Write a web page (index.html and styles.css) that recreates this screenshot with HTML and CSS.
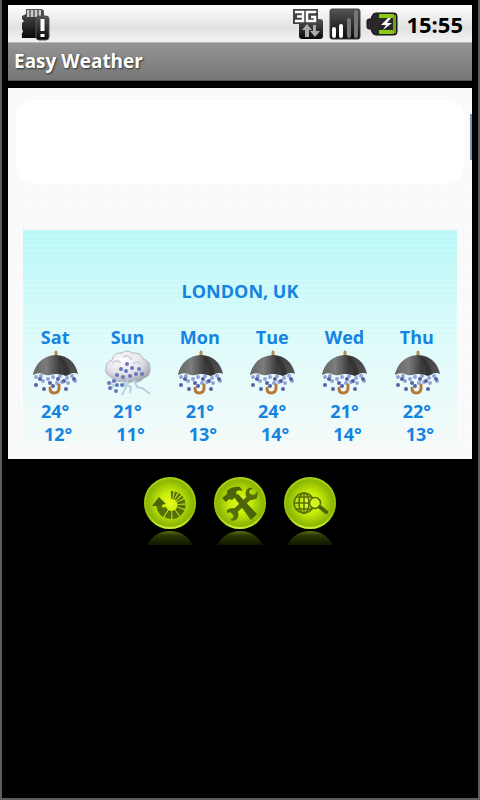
FILE: index.html
```html
<!DOCTYPE html>
<html lang="en">
<head>
    <meta charset="UTF-8">
    <meta name="viewport" content="width=device-width, initial-scale=1.0">
    <title>Easy Weather</title>
    <link rel="stylesheet" href="styles.css">
</head>
<body>
    <!-- Shared drawings -->
    <svg class="defs" width="0" height="0" aria-hidden="true">
        <defs>
            <linearGradient id="dark" x1="0" y1="0" x2="0" y2="1">
                <stop offset="0" stop-color="#555"/>
                <stop offset="1" stop-color="#080808"/>
            </linearGradient>
            <linearGradient id="canopy" x1="0" y1="0" x2="1" y2="0">
                <stop offset="0" stop-color="#666"/>
                <stop offset="0.3" stop-color="#7c7c7c"/>
                <stop offset="0.6" stop-color="#3a3a3a"/>
                <stop offset="1" stop-color="#555"/>
            </linearGradient>
            <radialGradient id="cloudfill" cx="0.4" cy="0.3" r="0.7">
                <stop offset="0" stop-color="#fff"/>
                <stop offset="0.6" stop-color="#e2e2ea"/>
                <stop offset="1" stop-color="#a3a7b1"/>
            </radialGradient>
            <radialGradient id="green" cx="0.5" cy="0.5" r="0.5">
                <stop offset="0" stop-color="#e6fc1e"/>
                <stop offset="0.45" stop-color="#c4ea0a"/>
                <stop offset="0.85" stop-color="#92bc04"/>
                <stop offset="1" stop-color="#88b400"/>
            </radialGradient>
            <linearGradient id="rim" x1="0" y1="0" x2="0" y2="1">
                <stop offset="0" stop-color="#a8d014"/>
                <stop offset="0.7" stop-color="#94c000"/>
                <stop offset="1" stop-color="#c8f030"/>
            </linearGradient>
            <linearGradient id="mirror" x1="0" y1="0" x2="0" y2="1">
                <stop offset="0" stop-color="#5c7410"/>
                <stop offset="0.3" stop-color="#2c3a06"/>
                <stop offset="1" stop-color="#101600"/>
            </linearGradient>
        </defs>
        <symbol id="drops" viewBox="0 0 48 22">
            <g fill="#98a0d8">
                <circle cx="5" cy="4" r="2"/><circle cx="10" cy="3" r="2"/><circle cx="12" cy="8" r="2"/>
                <circle cx="17" cy="6" r="2"/><circle cx="22" cy="4" r="2"/><circle cx="26" cy="10" r="2"/>
                <circle cx="29" cy="3" r="2"/><circle cx="31" cy="9" r="2"/><circle cx="36" cy="5" r="2"/>
                <circle cx="41" cy="3" r="2"/><circle cx="44" cy="8" r="2"/><circle cx="37" cy="10" r="2"/>
            </g>
            <g fill="#5762a6">
                <circle cx="5" cy="12" r="2"/><circle cx="9" cy="6" r="2"/><circle cx="13" cy="16" r="2"/>
                <circle cx="19" cy="10" r="2"/><circle cx="27" cy="6" r="2"/><circle cx="33" cy="8" r="2"/>
                <circle cx="35" cy="16" r="2"/><circle cx="43" cy="6" r="2"/><circle cx="22" cy="13" r="2"/>
            </g>
        </symbol>
        <symbol id="umbrella" viewBox="0 0 48 48">
            <path d="M25 3v5" stroke="#b58a50" stroke-width="3" stroke-linecap="round"/>
            <use href="#drops" x="0" y="24" width="48" height="22"/>
            <path d="M28 36q1 8-5 8-4 0-4-5" fill="none" stroke="#b47838" stroke-width="3" stroke-linecap="round"/>
            <path d="M2 25Q7 7 25 6q18 1 22 19-4-2-8 0-4 3-7 1-6-2-13 0-4 1-7-1-5-2-10 1z" fill="url(#canopy)"/>
            <path d="M26 7q7 7 7 19 3 2 6-1Q37 11 26 7z" fill="#2c2c2c" fill-opacity="0.6"/>
        </symbol>
        <symbol id="storm" viewBox="0 0 48 48">
            <path d="M8 28Q1 25 3 19q0-6 6-8 2-8 10-7 5-4 10 0 9-1 11 6 8 2 7 10 1 7-6 9-5 6-11 3-5 4-11 0-7 2-11-4z" fill="url(#cloudfill)" stroke="#b4b8c0"/>
            <path d="M9 14q5-4 9 0M20 8q6-3 9 3M30 15q5-4 9 0" fill="none" stroke="#d4d5dc" stroke-width="2"/>
            <path d="M15 30l-8 5 5 1-5 5M25 31l-4 6 2 1-4 8M31 31l3 7 5 1 8 6M20 34l8 4-1 6" fill="none" stroke="#b4d4e6" stroke-width="2"/>
            <g fill="#6a76ba">
                <circle cx="24" cy="15" r="2"/><circle cx="18" cy="20" r="2"/><circle cx="29" cy="19" r="2"/>
                <circle cx="36" cy="20" r="2"/><circle cx="23" cy="22" r="2"/><circle cx="14" cy="26" r="2"/>
                <circle cx="33" cy="25" r="2"/><circle cx="39" cy="25" r="2"/><circle cx="20" cy="28" r="2"/>
                <circle cx="27" cy="27" r="2"/><circle cx="11" cy="32" r="2"/><circle cx="6" cy="34" r="2"/>
                <circle cx="14" cy="36" r="2"/><circle cx="7" cy="39" r="2"/><circle cx="13" cy="42" r="2"/>
                <circle cx="19" cy="36" r="2"/>
            </g>
        </symbol>
        <symbol id="orb" viewBox="0 0 54 70">
            <circle cx="27" cy="27" r="25" fill="url(#green)" stroke="url(#rim)" stroke-width="2"/>
            <path d="M4 69Q12 55 27 55t23 14z" fill="url(#mirror)"/>
        </symbol>
    </svg>

    <div class="phone">
        <header class="status">
            <svg class="sdcard" width="30" height="34" viewBox="0 0 30 34">
                <path d="M6 2h15q3 0 3 3v26H2q-1-4 1-7l-1-2v-6l2-2-2-2V9l4-2z" fill="url(#dark)"/>
                <path d="M7 3h14v7H7z" fill="#777"/>
                <path d="M8 3v7M12 3v7M16 3v7M20 3v7" stroke="#ccc" stroke-width="2"/>
                <rect x="16" y="9" width="13" height="24" rx="3" fill="url(#dark)" stroke="#555"/>
                <path d="M22.500 12v12M22.500 27v3" stroke="#fff" stroke-width="4"/>
            </svg>
            <svg class="network" width="32" height="32" viewBox="0 0 32 32">
                <rect x="7" y="11" width="24" height="20" rx="3" fill="url(#dark)"/>
                <path d="M1 1h25v15H1z" fill="#444"/>
                <path d="M3 4h8v9H3M5 8.500h6M23 5V4h-8v9h8V9h-4" fill="none" stroke="#fff" stroke-width="2.500"/>
                <path d="M10 22l5-6 5 6h-3v7h-4v-7zM18 23h3v-6h3v6h4l-5 6z" fill="#aaa"/>
            </svg>
            <svg class="signal" width="32" height="32" viewBox="0 0 32 32">
                <rect x="1" y="1" width="30" height="30" rx="2" fill="url(#dark)" stroke="#444"/>
                <path d="M5 28V21M12 28V18" stroke="#fff" stroke-width="4" stroke-linecap="round"/>
                <path d="M20 28V12M27 28V4" stroke="#777" stroke-width="4" stroke-linecap="round"/>
            </svg>
            <svg class="battery" width="32" height="26" viewBox="0 0 32 26">
                <path d="M6 5q1-3 4-3h18q3 0 3 3v16q0 3-3 3H10q-3 0-4-3l-1-3H3q-2 0-2-2v-6q0-2 2-2h2z" fill="#282828" stroke="#111"/>
                <path d="M13 3h15v4H13zM13 19h15v4H13z" fill="#8cc814"/>
                <path d="M27 4h3v18h-3z" fill="#6fa40c"/>
                <path d="M22 7l-7 7h5l-3 5 9-7h-5l4-5z" fill="#fff"/>
            </svg>
            <span class="clock">15:55</span>
        </header>
        <h1 class="titlebar">Easy Weather</h1>

        <main>
            <section class="widget">
                <div class="banner"></div>
                <div class="forecast">
                    <h2>LONDON, UK</h2>
                    <ul class="days">
                        <li><h3>Sat</h3><svg width="48" height="48"><use href="#umbrella"/></svg><span>24°</span><span class="low">12°</span></li>
                        <li><h3>Sun</h3><svg width="48" height="48"><use href="#storm"/></svg><span>21°</span><span class="low">11°</span></li>
                        <li><h3>Mon</h3><svg width="48" height="48"><use href="#umbrella"/></svg><span>21°</span><span class="low">13°</span></li>
                        <li><h3>Tue</h3><svg width="48" height="48"><use href="#umbrella"/></svg><span>24°</span><span class="low">14°</span></li>
                        <li><h3>Wed</h3><svg width="48" height="48"><use href="#umbrella"/></svg><span>21°</span><span class="low">14°</span></li>
                        <li><h3>Thu</h3><svg width="48" height="48"><use href="#umbrella"/></svg><span>22°</span><span class="low">13°</span></li>
                    </ul>
                </div>
            </section>

            <nav class="actions">
                <button type="button" aria-label="Refresh">
                    <svg width="54" height="70" viewBox="0 0 54 70">
                        <use href="#orb"/>
                        <path d="M28 19a10 10 0 1 1-9 13" fill="none" stroke="#566e08" stroke-width="8" stroke-dasharray="2 1 2 1 2 1 2 1 3 1 3 1 5 1 5 1 5 1 40"/>
                        <path d="M13 28l6 0q0 6 4 8l-3 5q-6-4-7-13z" fill="#566e08"/>
                        <path d="M9 30l7-9 7 7-5 1-4 1z" fill="#4c6408"/>
                    </svg>
                </button>
                <button type="button" aria-label="Settings">
                    <svg width="54" height="70" viewBox="0 0 54 70">
                        <use href="#orb"/>
                        <path d="M19 38L38 20" stroke="#566e08" stroke-width="5"/>
                        <path d="M34 13q-3 5 0 9 4 4 10 0l1-7-4 4-4-1-1-3 4-3q-3-1-6 1z" fill="#566e08"/>
                        <path d="M24 43q3-5 0-9-4-4-10 0v3l4-1 3 2-1 4-3 2q4 2 7-1z" fill="#566e08"/>
                        <path d="M21 21l4-3 19 20-6 6z" fill="#4c6408"/>
                        <path d="M9 22l5-4v-3q5-5 13-4l3 4q-5-2-7 1l1 3-5 5-3-1-3 3z" fill="#4c6408"/>
                    </svg>
                </button>
                <button type="button" aria-label="Search location">
                    <svg width="54" height="70" viewBox="0 0 54 70">
                        <use href="#orb"/>
                        <g fill="none" stroke="#566e08" stroke-width="1.500">
                            <circle cx="21" cy="27" r="10"/>
                            <ellipse cx="21" cy="27" rx="5" ry="10"/>
                            <path d="M21 17v20M11 27h20M13 21h16M13 33h16"/>
                        </g>
                        <circle cx="32" cy="27" r="5.500" fill="#d4f420" stroke="#566e08" stroke-width="1.500"/>
                        <path d="M37 31l6 5" stroke="#4c6408" stroke-width="4" stroke-linecap="round"/>
                    </svg>
                </button>
            </nav>
        </main>
    </div>
</body>
</html>
```

FILE: styles.css
```css
* {
    box-sizing: border-box;
}
body {
    margin: 0;
    background-color: #000;
    font-family: "Open Sans", "Noto Sans", sans-serif;
    font-weight: 700;
}
h1, h2, h3, ul {
    margin: 0;
    padding: 0;
    font-weight: 700;
}
svg {
    display: block;
}
.defs {
    position: absolute;
}
.phone {
    min-height: 100vh;
    padding: 5px 6px;
    border: 2px solid #5c5c5c;
    border-top: 0;
    background-color: #000;
}

/* Status bar */
.status {
    display: flex;
    align-items: center;
    height: 38px;
    padding: 0 9px 0 12px;
    background: linear-gradient(#fff, #e2e2e2 60%, #f2f2f2);
    border-bottom: 1px solid #b8b8b8;
}
.sdcard {
    margin-right: auto;
}
.signal {
    margin: 0 5px;
}
.clock {
    margin-left: 8px;
    color: #000;
    font-size: 22px;
    line-height: 36px;
}
.titlebar {
    height: 38px;
    padding-left: 6px;
    background: linear-gradient(#949494, #767676);
    border-bottom: 1px solid #555;
    color: #fff;
    font-size: 19px;
    line-height: 36px;
    text-shadow: 1px 1px 2px #333;
}

/* Weather widget */
.widget {
    margin-top: 7px;
    padding: 12px 15px;
    background-color: #fbfbfb;
    background-image:
        repeating-linear-gradient(#f8f8f8 0 1px, transparent 1px 5px),
        repeating-linear-gradient(90deg, #f8f8f8 0 1px, transparent 1px 5px);
}
.banner {
    position: relative;
    height: 84px;
    margin: 0 -7px 46px;
    border-radius: 18px;
    background-color: #fff;
}
.banner::after {
    content: "";
    position: absolute;
    top: 14px;
    right: -8px;
    width: 2px;
    height: 46px;
    background-color: #7d92b8;
}
.forecast {
    padding: 49px 0 1px;
    background:
        repeating-linear-gradient(rgba(255, 255, 255, 0.2) 0 1px, transparent 1px 5px),
        linear-gradient(#b8f7f7, #d8fbfa 45%, #f4faf8);
    color: #1583e2;
    font-size: 18px;
    line-height: 24px;
    text-align: center;
}
.forecast h2 {
    margin-bottom: 22px;
    font-size: 18px;
}
.days {
    display: grid;
    grid-template-columns: repeat(6, 1fr);
    list-style: none;
}
.days li {
    display: flex;
    flex-direction: column;
    align-items: center;
    padding-right: 8px;
    line-height: 23px;
}
.days h3 {
    font-size: 18px;
    line-height: 24px;
}
.days svg {
    margin-bottom: 3px;
}
.low {
    padding-left: 6px;
}

/* Round buttons */
.actions {
    display: flex;
    justify-content: center;
    gap: 16px;
    margin-top: 17px;
}
.actions button {
    padding: 0;
    border: 0;
    background: none;
    cursor: pointer;
}
```
